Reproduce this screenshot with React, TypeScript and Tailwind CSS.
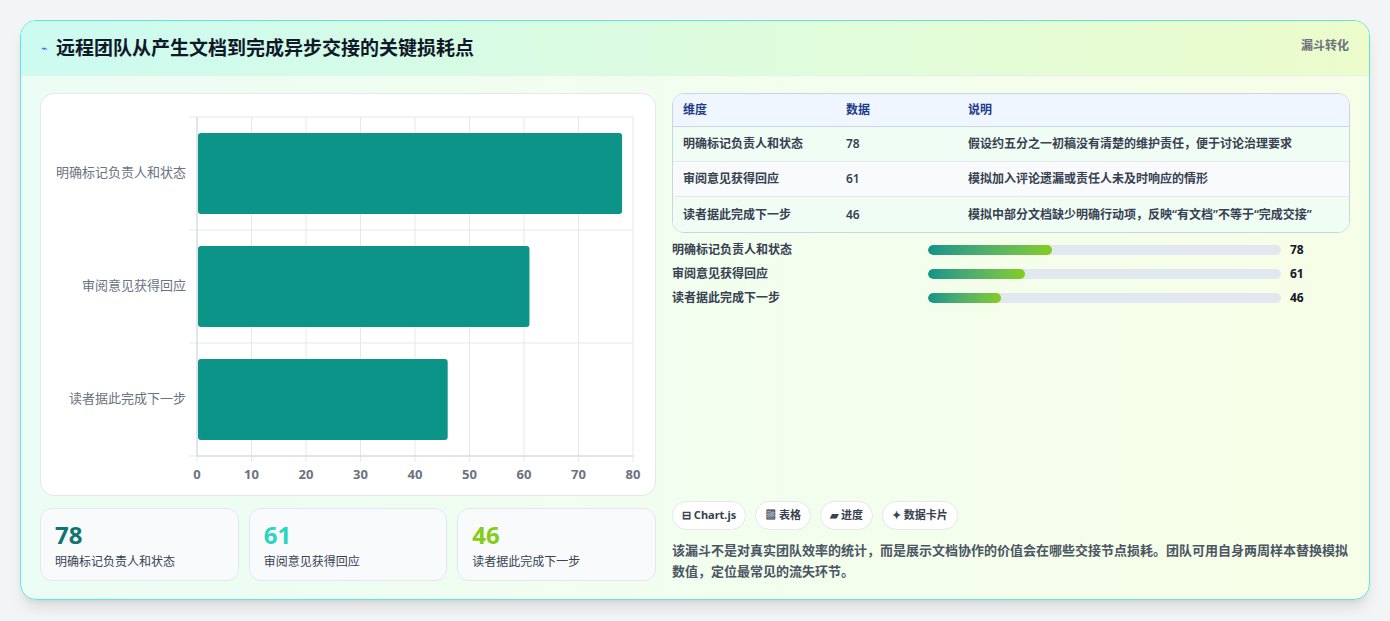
import React from "react";

const rows = [
  { name: "明确标记负责人和状态", v: 78, d: "假设约五分之一初稿没有清楚的维护责任，便于讨论治理要求" },
  { name: "审阅意见获得回应", v: 61, d: "模拟加入评论遗漏或责任人未及时响应的情形" },
  { name: "读者据此完成下一步", v: 46, d: "模拟中部分文档缺少明确行动项，反映“有文档”不等于“完成交接”" },
];

function Chart() {
  const W = 436, H = 339;
  const ticks = [0, 10, 20, 30, 40, 50, 60, 70, 80];
  return (
    <div className="relative w-full h-full">
      <svg width="615" height="402" className="absolute left-0 top-0">
        <g transform="translate(156,23)">
          {ticks.map((t) => (
            <line key={t} x1={(t / 80) * W} x2={(t / 80) * W} y1={0} y2={H + 6} stroke="#e5e7eb" />
          ))}
          {[0, 1, 2, 3].map((i) => (
            <line key={i} x1={-8} x2={W} y1={i * 113} y2={i * 113} stroke="#e5e7eb" />
          ))}
          <line x1={0} x2={0} y1={0} y2={H} stroke="#d1d5db" />
          <line x1={0} x2={W} y1={H} y2={H} stroke="#d1d5db" />
          {rows.map((r, i) => (
            <g key={i}>
              <rect x={1} y={i * 113 + 16} width={(r.v / 80) * W - 1} height={81} rx={3} fill="#0d9488" />
              <text x={-11} y={i * 113 + 60} textAnchor="end" fontSize="13" fill="#6b7280" fontFamily="'Noto Sans CJK SC', sans-serif">{r.name}</text>
            </g>
          ))}
          {ticks.map((t) => (
            <text key={t} x={(t / 80) * W} y={H + 23} textAnchor="middle" fontSize="13" fontWeight="700" fill="#6b7280" fontFamily="'Noto Sans', sans-serif">{t}</text>
          ))}
        </g>
      </svg>
    </div>
  );
}

export default function App() {
  const colors = ["text-[#0f766e]", "text-[#2dd4bf]", "text-[#84cc16]"];
  return (
    <div className="w-[1390px] h-[621px] bg-[#f3f4f6] pt-[20px] px-[20px]" style={{ fontFamily: "'Noto Sans', 'Noto Sans CJK SC', sans-serif" }}>
      <div className="w-[1350px] h-[580px] rounded-[16px] border border-[#5eead4] overflow-hidden bg-gradient-to-r from-[#ecfdf5] to-[#f7fee7] shadow-lg flex flex-col">
        <div className="h-[55px] flex items-start justify-between px-[20px] bg-gradient-to-r from-[#ccfbf1] to-[#ecfccb] border-b border-[#e2f3ec]">
          <div className="flex items-center gap-[8px] h-[55px]">
            <span className="text-[#2563eb] text-[11px]">⌁</span>
            <span className="text-[19px] font-bold text-[#111827]">远程团队从产生文档到完成异步交接的关键损耗点</span>
          </div>
          <span className="text-[12px] font-bold text-[#6b7280] mt-[16px]">漏斗转化</span>
        </div>
        <div className="flex gap-[16px] px-[19px] pt-[17px]">
          <div className="w-[616px] flex flex-col gap-[12px]">
            <div className="h-[403px] bg-white rounded-[14px] border border-[#e5e7eb]">
              <Chart />
            </div>
            <div className="grid grid-cols-3 gap-[10px]">
              {rows.map((r, i) => (
                <div key={i} className="h-[73px] bg-[#f8fafc] rounded-[12px] border border-[#e2e8f0] px-[14px] pt-[10px]">
                  <div className={`text-[24px] font-bold leading-[32px] ${colors[i]}`}>{r.v}</div>
                  <div className="text-[12px] text-[#374151] mt-[2px]">{r.name}</div>
                </div>
              ))}
            </div>
          </div>
          <div className="flex-1 flex flex-col">
            <div className="rounded-[12px] border border-[#cbd5e1] overflow-hidden bg-white">
              <div className="h-[33px] flex items-center bg-[#eff6ff] text-[12px] font-bold text-[#1e3a8a] border-b border-[#cbd5e1] px-[10px]">
                <span className="w-[163px]">维度</span><span className="w-[122px]">数据</span><span>说明</span>
              </div>
              {rows.map((r, i) => (
                <div key={i} className={`h-[35px] flex items-center text-[12px] font-semibold text-[#374151] px-[10px] ${i < 2 ? "border-b border-[#e5e7eb]" : ""} ${i % 2 === 0 ? "bg-[#f0fdf4]" : "bg-[#f8fafc]"}`}>
                  <span className="w-[163px]">{r.name}</span><span className="w-[122px]">{r.v}</span><span>{r.d}</span>
                </div>
              ))}
            </div>
            <div className="flex flex-col gap-[10px] mt-[10px]">
              {rows.map((r, i) => (
                <div key={i} className="flex items-center h-[14px] text-[12px] font-semibold text-[#374151]">
                  <span className="w-[256px]">{r.name}</span>
                  <div className="w-[353px] h-[10px] rounded-full bg-[#e2e8f0] overflow-hidden">
                    <div className="h-full rounded-full bg-gradient-to-r from-[#0d9488] to-[#84cc16]" style={{ width: `${r.v * 0.45}%` }} />
                  </div>
                  <span className="ml-[9px] font-bold text-[#111827]">{r.v}</span>
                </div>
              ))}
            </div>
            <div className="flex gap-[9px] mt-[196px]">
              {["⊟ Chart.js", "▩ 表格", "▰ 进度", "✦ 数据卡片"].map((t) => (
                <span key={t} className="h-[29px] px-[9px] flex items-center rounded-full border border-[#e5e7eb] bg-white text-[11px] font-bold text-[#374151]">{t}</span>
              ))}
            </div>
            <p className="mt-[10px] text-[13px] leading-[21px] font-semibold text-[#4b5563]">该漏斗不是对真实团队效率的统计，而是展示文档协作的价值会在哪些交接节点损耗。团队可用自身两周样本替换模拟数值，定位最常见的流失环节。</p>
          </div>
        </div>
      </div>
    </div>
  );
}
